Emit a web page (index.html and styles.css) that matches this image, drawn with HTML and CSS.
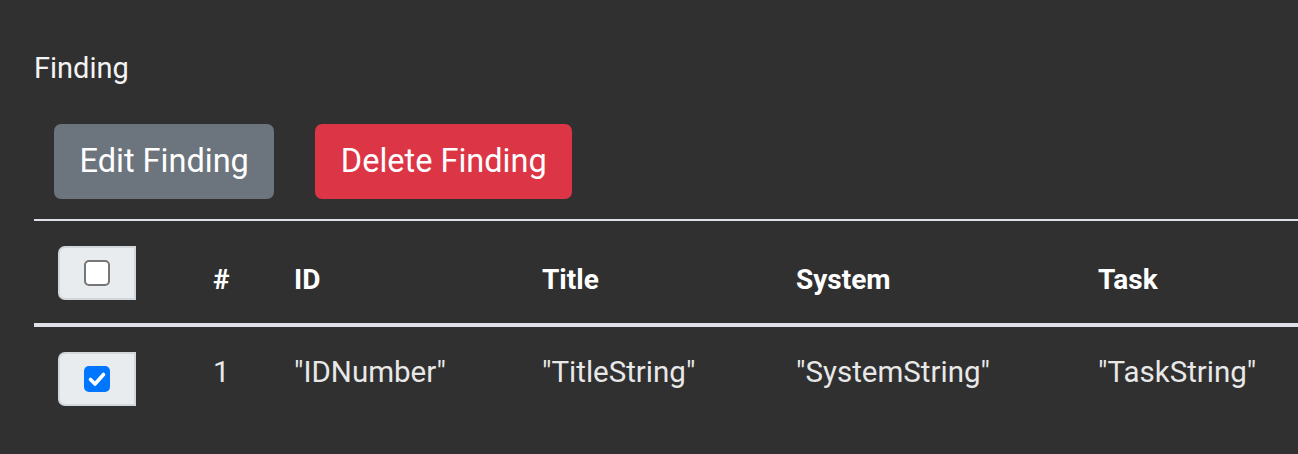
FILE: index.html
```html
<!DOCTYPE html>
<html lang="en">
<head>
<meta charset="utf-8">
<title>Finding</title>
<link rel="stylesheet" href="styles.css">
</head>
<body>
<main class="page">
  <div class="title">Finding</div>
  <div class="actions">
    <button class="btn btn-secondary">Edit Finding</button>
    <button class="btn btn-danger">Delete Finding</button>
  </div>
  <table class="grid">
    <colgroup>
      <col class="c-check">
      <col class="c-num">
      <col class="c-id">
      <col class="c-title">
      <col class="c-system">
      <col class="c-task">
    </colgroup>
    <thead>
      <tr>
        <th class="cell-check">
          <span class="check-group"><span class="cb"></span></span>
        </th>
        <th>#</th>
        <th>ID</th>
        <th>Title</th>
        <th>System</th>
        <th>Task</th>
      </tr>
    </thead>
    <tbody>
      <tr>
        <td class="cell-check">
          <span class="check-group"><span class="cb cb-checked"><svg viewBox="0 0 26 26" width="26" height="26"><path d="M6.5 13.5 L11 18 L19.5 8.5" fill="none" stroke="#fff" stroke-width="3.6" stroke-linecap="round" stroke-linejoin="round"/></svg></span></span>
        </td>
        <td>1</td>
        <td>"IDNumber"</td>
        <td>"TitleString"</td>
        <td>"SystemString"</td>
        <td>"TaskString"</td>
      </tr>
    </tbody>
  </table>
</main>
</body>
</html>
```

FILE: styles.css
```css
html, body {
  margin: 0;
  padding: 0;
  background: #303030;
}

body {
  font-family: Roboto, "Noto Sans", sans-serif;
  color: #e8e8e8;
  overflow: hidden;
}

.page {
  padding: 51px 0 0 34px;
}

.title {
  font-size: 29px;
  line-height: 35px;
  color: #f4f4f4;
}

.actions {
  display: flex;
  gap: 41px;
  margin: 38px 0 0 20px;
}

.btn {
  font-family: Roboto, "Noto Sans", sans-serif;
  font-size: 32.5px;
  line-height: 1.5;
  height: 75px;
  padding: 0 25.5px;
  border: 0;
  border-radius: 7px;
  color: #fff;
  cursor: pointer;
}

.btn-secondary {
  background: #6c757d;
}

.btn-danger {
  background: #dc3545;
}

.grid {
  margin-top: 20px;
  width: 100%;
  table-layout: fixed;
  border-collapse: collapse;
  line-height: 40px;
}

.c-check { width: 155px; }
.c-num { width: 81px; }
.c-id { width: 248px; }
.c-title { width: 254px; }
.c-system { width: 302px; }

.grid thead tr {
  border-top: 2px solid #dee2e6;
  border-bottom: 4px solid #dee2e6;
}

.grid th {
  text-align: left;
  vertical-align: bottom;
  font-size: 28px;
  font-weight: 700;
  color: #fff;
  padding: 25px 24px 23px;
  white-space: nowrap;
}

.grid td {
  text-align: left;
  vertical-align: top;
  font-size: 29.5px;
  padding: 25px 24px 24px;
  white-space: nowrap;
}

.grid td.cell-check,
.grid th.cell-check {
  padding-top: 25px;
  line-height: 0;
}

.check-group {
  display: inline-flex;
  align-items: center;
  justify-content: center;
  box-sizing: border-box;
  width: 78px;
  height: 54px;
  background: #e9ecef;
  border: 2px solid #d2d7dc;
  border-radius: 7px 0 0 7px;
}

.cb {
  display: block;
  box-sizing: border-box;
  width: 26px;
  height: 26px;
  background: #fff;
  border: 2px solid #767676;
  border-radius: 5px;
}

.cb-checked {
  background: #0075ff;
  border: 0;
}

.cb-checked svg {
  display: block;
}
```
